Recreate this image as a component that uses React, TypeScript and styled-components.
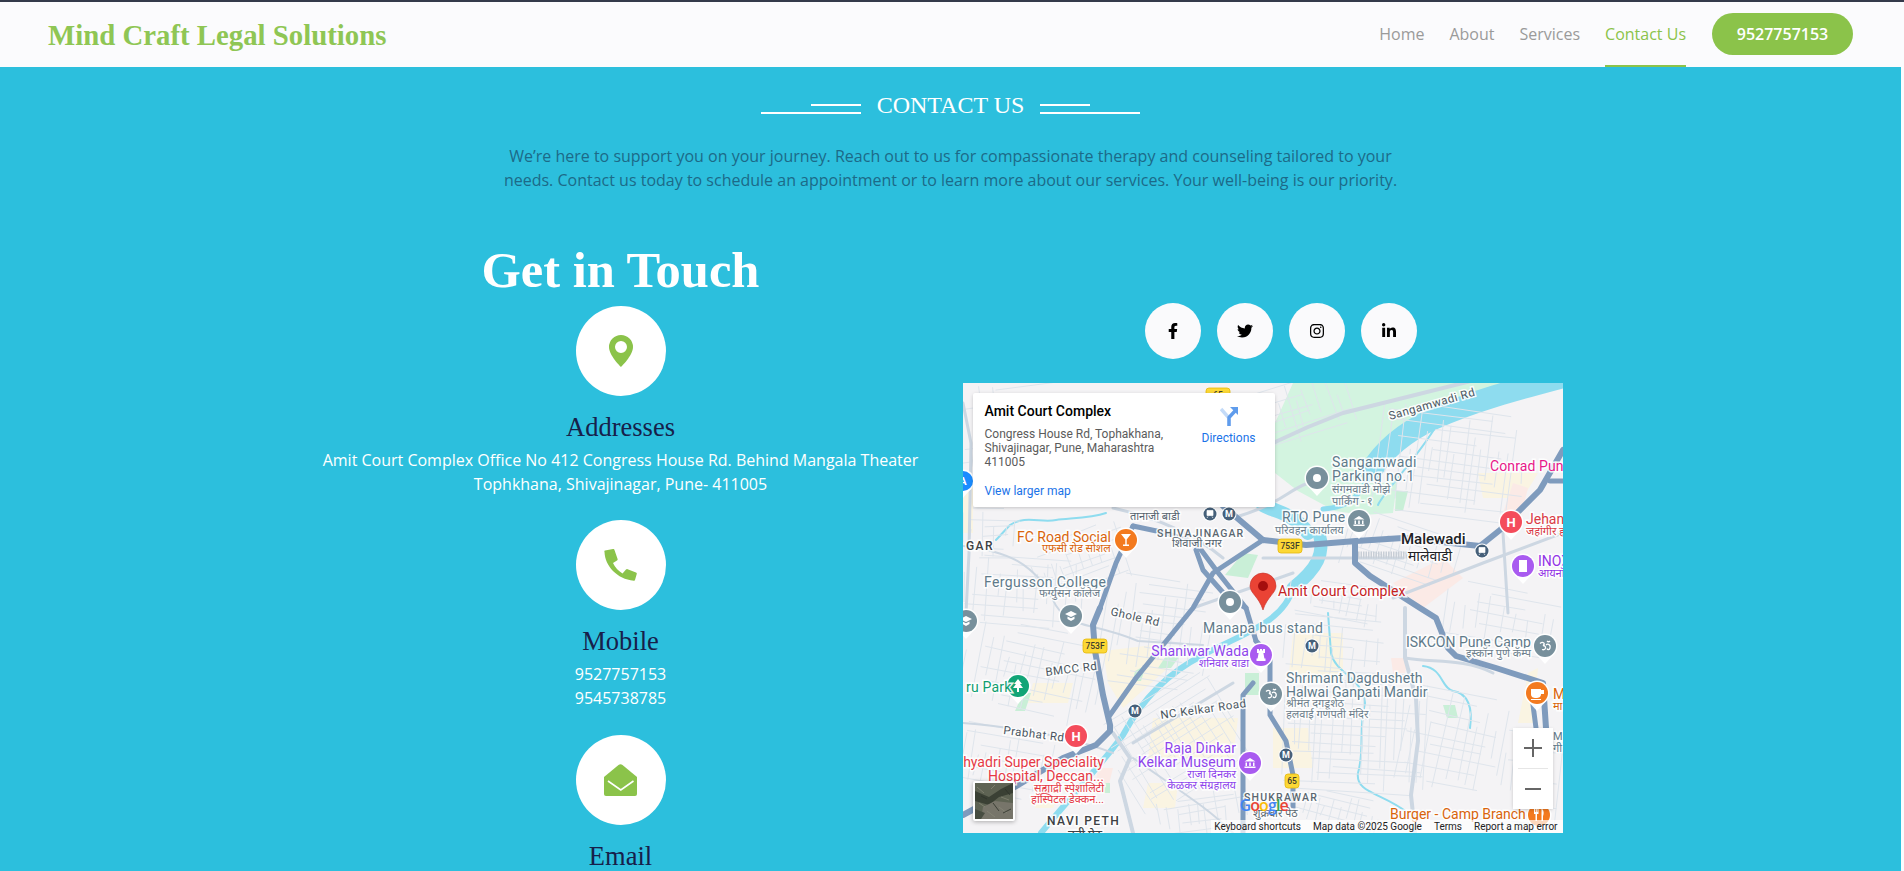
import React from "react";
import styled, { createGlobalStyle } from "styled-components";
import { FaFacebookF, FaTwitter, FaInstagram, FaLinkedinIn } from "react-icons/fa";
import { BsGeoAltFill } from "react-icons/bs";

const SERIF = `"Liberation Serif", "Times New Roman", serif`;
const SANS = `"Open Sans", "Noto Sans", sans-serif`;
const GREEN = "#8bc34a";
const CYAN = "#2cbfdd";

const Global = createGlobalStyle`
  html, body { margin: 0; padding: 0; height: 871px; overflow: hidden; background: #fbfbfd; }
  * { box-sizing: border-box; }
  body { font-family: ${SANS}; font-size: 16px; line-height: 24px; }
`;

const TopStrip = styled.div`
  height: 2px;
  background: #343a4a;
`;
const Page = styled.div`
  margin-right: 3px;
  height: 869px;
  overflow: hidden;
  background: ${CYAN};
`;
const Header = styled.header`
  height: 65px;
  background: #fbfbfd;
  padding: 0 48px;
  display: flex;
  align-items: stretch;
  justify-content: space-between;
`;
const Brand = styled.div`
  align-self: center;
  font-family: ${SERIF};
  font-size: 28.8px;
  font-weight: 700;
  color: #8fc654;
  line-height: 40px;
`;
const Nav = styled.nav`
  display: flex;
  align-items: stretch;
  gap: 25px;
`;
const NavLink = styled.a<{ $active?: boolean }>`
  display: flex;
  align-items: center;
  padding-top: 1px;
  font-size: 16px;
  color: ${(p) => (p.$active ? GREEN : "#9a9a9a")};
  border-bottom: 2px solid ${(p) => (p.$active ? GREEN : "transparent")};
`;
const CallButton = styled.a`
  align-self: center;
  margin-top: -1px;
  margin-left: 1px;
  height: 42px;
  width: 141px;
  border-radius: 21px;
  background: ${GREEN};
  color: #fff;
  font-weight: 600;
  font-size: 16px;
  display: flex;
  align-items: center;
  justify-content: center;
`;
const Section = styled.main`
  padding-top: 24px;
`;
const TitleRow = styled.div`
  display: flex;
  align-items: center;
  justify-content: center;
  gap: 16px;
`;
const Title = styled.h5`
  margin: 0;
  font-family: ${SERIF};
  font-weight: 400;
  font-size: 24px;
  line-height: 29px;
  color: #fff;
  white-space: nowrap;
`;
const TitleRule = styled.span<{ $side: "left" | "right" }>`
  position: relative;
  display: block;
  width: 100px;
  height: 10px;
  margin-top: 7px;
  border-bottom: 2px solid #fff;
  &::after {
    content: "";
    position: absolute;
    top: 0;
    ${(p) => (p.$side === "left" ? "right: 0;" : "left: 0;")}
    width: 50px;
    height: 2px;
    background: #fff;
  }
`;
const Lead = styled.p`
  margin: 24px auto 0;
  width: 920px;
  text-align: center;
  color: #1c6a88;
  font-size: 16px;
  line-height: 24px;
`;
const Columns = styled.div`
  width: 1320px;
  margin: 50px auto 0;
  display: grid;
  grid-template-columns: 1fr 1fr;
`;
const InfoColumn = styled.div`
  padding: 0 12px;
  text-align: center;
`;
const Heading = styled.h1`
  margin: 0 0 8px;
  font-family: ${SERIF};
  font-size: 50.5px;
  font-weight: 700;
  line-height: 56px;
  color: #fff;
`;
const InfoItem = styled.div`
  margin-bottom: 24.4px;
  display: flex;
  flex-direction: column;
  align-items: center;
`;
const IconCircle = styled.div`
  width: 90px;
  height: 90px;
  border-radius: 50%;
  background: #fff;
  color: ${GREEN};
  display: flex;
  align-items: center;
  justify-content: center;
  font-size: 32px;
`;
const InfoTitle = styled.h4`
  margin: 17px 0 6px;
  font-family: ${SERIF};
  font-weight: 400;
  font-size: 26.5px;
  line-height: 29px;
  color: #17204a;
`;
const InfoText = styled.div`
  color: #fff;
`;
const SideColumn = styled.div`
  padding: 61px 12px 0;
`;
const Socials = styled.div`
  display: flex;
  justify-content: center;
  gap: 16px;
  margin-bottom: 24px;
`;
const SocialLink = styled.a`
  width: 56px;
  height: 56px;
  border-radius: 50%;
  background: #fafafc;
  color: #000;
  font-size: 16px;
  display: flex;
  align-items: center;
  justify-content: center;
`;

/* ---------- map ---------- */
const MapFrame = styled.div`
  position: relative;
  width: 600px;
  height: 450px;
  overflow: hidden;
  background: #f4f3f5;
  font-family: Roboto, Arial, sans-serif;
`;
const MapCanvas = styled.svg`
  display: block;
`;
const MapLabel = styled.text<{ $c: string; $s: number; $w?: number; $ls?: number }>`
  font-family: Roboto, "Noto Sans Devanagari", "Noto Sans", sans-serif;
  fill: ${(p) => p.$c};
  font-size: ${(p) => p.$s}px;
  font-weight: ${(p) => p.$w ?? 400};
  letter-spacing: ${(p) => p.$ls ?? 0}px;
  paint-order: stroke;
  stroke: rgba(255, 255, 255, 0.9);
  stroke-width: 3px;
`;
const Popup = styled.div`
  position: absolute;
  left: 10px;
  top: 10px;
  width: 302px;
  height: 114px;
  background: #fff;
  border-radius: 2px;
  box-shadow: 0 1px 4px -1px rgba(0, 0, 0, 0.3);
  padding: 9px 12px 12px;
  display: flex;
  justify-content: space-between;
`;
const PopupBody = styled.div`
  width: 190px;
  display: flex;
  flex-direction: column;
`;
const PlaceName = styled.div`
  font-size: 14px;
  line-height: 18px;
  font-weight: 500;
  color: #000;
`;
const PlaceAddress = styled.div`
  margin-top: 7px;
  font-size: 12px;
  line-height: 14px;
  color: #5b5b5b;
`;
const MapLink = styled.a`
  font-size: 12px;
  line-height: 14px;
  color: #1a73e8;
`;
const LargerLink = styled(MapLink)`
  margin-top: 15px;
`;
const Directions = styled.div`
  display: flex;
  flex-direction: column;
  align-items: center;
  gap: 5px;
  width: 54px;
  margin: 4px 7px 0 0;
`;
const ZoomBox = styled.div`
  position: absolute;
  left: 550px;
  top: 345px;
  width: 40px;
  height: 81px;
  background: #fff;
  display: flex;
  flex-direction: column;
  align-items: center;
  justify-content: space-between;
  box-shadow: 0 1px 4px -1px rgba(0, 0, 0, 0.3);
`;
const ZoomBtn = styled.div`
  height: 40px;
  display: flex;
  align-items: center;
  justify-content: center;
`;
const ZoomRule = styled.div`
  width: 30px;
  height: 1px;
  background: #e6e6e6;
`;
const Satellite = styled.div`
  position: absolute;
  left: 10px;
  top: 398px;
  width: 42px;
  height: 40px;
  border: 2px solid #fff;
  border-radius: 2px;
  box-shadow: 0 1px 4px rgba(0, 0, 0, 0.3);
  overflow: hidden;
  background: #6b6f5c;
`;
const Attribution = styled.div`
  position: absolute;
  right: 0;
  bottom: 0;
  height: 13px;
  display: flex;
  align-items: center;
  padding: 0 5px 0 3px;
  gap: 12px;
  background: rgba(255, 255, 255, 0.7);
  font-size: 10px;
  line-height: 13px;
  color: #222;
  white-space: nowrap;
`;
const GoogleMark = styled.div`
  position: absolute;
  left: 277px;
  top: 411px;
  font-family: "Open Sans", Roboto, sans-serif;
  font-size: 16px;
  font-weight: 600;
  line-height: 22px;
  letter-spacing: -0.9px;
`;
const Hue = styled.span<{ $c: string }>`
  color: ${(p) => p.$c};
`;

/* deterministic street cluster generator */
function streets() {
  let seed = 17;
  const rnd = () => {
    seed = (seed * 1103515245 + 12345) & 0x7fffffff;
    return seed / 0x7fffffff;
  };
  const clusters: number[][] = [
    [60, 60, 130, 130, -8, 12],
    [60, 210, 120, 70, 4, 10],
    [70, 290, 140, 90, 12, 9],
    [40, 380, 100, 70, 10, 9],
    [195, 250, 110, 110, 8, 8],
    [215, 360, 130, 110, -32, 8],
    [240, 430, 90, 50, -8, 8],
    [370, 270, 100, 70, 6, 9],
    [395, 350, 150, 120, 3, 8],
    [370, 430, 100, 40, 14, 8],
    [490, 360, 100, 100, 12, 11],
    [540, 240, 120, 70, 10, 11],
    [490, 80, 150, 110, 7, 8],
    [440, 170, 120, 60, 18, 9],
    [570, 400, 60, 100, 6, 9],
    [330, 30, 120, 60, -18, 10],
    [370, 220, 90, 40, 10, 9],
    [120, 180, 100, 60, -20, 9],
    [30, 150, 60, 50, 0, 9],
  ];
  let d = "";
  for (const [cx, cy, w, h, a, step] of clusters) {
    const r = (a * Math.PI) / 180;
    const c = Math.cos(r);
    const s = Math.sin(r);
    const pt = (u: number, v: number) =>
      `${(cx + u * c - v * s).toFixed(1)} ${(cy + u * s + v * c).toFixed(1)}`;
    for (let v = -h / 2; v <= h / 2; v += step * (0.7 + rnd() * 0.7)) {
      const a0 = -w / 2 + rnd() * w * 0.4;
      const a1 = w / 2 - rnd() * w * 0.4;
      d += `M${pt(a0, v)}L${pt(a1, v + (rnd() - 0.5) * 4)}`;
    }
    for (let u = -w / 2; u <= w / 2; u += step * (0.7 + rnd() * 0.8)) {
      const b0 = -h / 2 + rnd() * h * 0.45;
      const b1 = h / 2 - rnd() * h * 0.45;
      d += `M${pt(u, b0)}L${pt(u + (rnd() - 0.5) * 4, b1)}`;
    }
  }
  return d;
}
const STREETS = streets();

type L = [string, number, number, string, number, number?, number?, "end"?];
const DEV = "#6d7f8c";
const GREY = "#5f7a8a";
const labels: L[] = [
  ["GAR", 3, 167, "#3c4043", 12, 500, 1.4],
  ["FC Road Social", 54, 159, "#d9640b", 14],
  ["एफसी रोड सोशल", 79, 169, "#d9640b", 11],
  ["तानाजी बाडी", 167, 137, "#55636e", 11],
  ["SHIVAJINAGAR", 194, 154, "#5b6770", 10.5, 500, 1.1],
  ["शिवाजी नगर", 209, 164, "#55636e", 11],
  ["Fergusson College", 21, 204, GREY, 14, 400, 0.4],
  ["फर्ग्युसन कॉलेज", 76, 214, DEV, 11],
  ["Sangamwadi", 369, 84, GREY, 14, 400, 0.4],
  ["Parking no.1", 369, 98, GREY, 14, 400, 0.4],
  ["संगमवाडी मोझे", 369, 110, DEV, 11],
  ["पार्किंग - १", 369, 122, DEV, 11],
  ["RTO Pune", 319, 139, GREY, 14, 400, 0.3],
  ["परिवहन कार्यालय", 312, 151, DEV, 11],
  ["Conrad Pun", 527, 88, "#e8178a", 14, 400, 0.1],
  ["Malewadi", 438, 161, "#202124", 15, 500],
  ["मालेवाडी", 445, 178, "#202124", 14],
  ["Jehan", 563, 141, "#d93a45", 14],
  ["जहांगीर ह", 563, 152, "#d93a45", 11],
  ["INOX", 575, 183, "#9334e6", 14],
  ["आयनॉक्स", 575, 194, "#9334e6", 11],
  ["Amit Court Complex", 315, 213, "#c5221f", 14, 400, 0.1],
  ["Manapa bus stand", 240, 250, GREY, 14, 400, 0.3],
  ["ISKCON Pune Camp", 443, 264, GREY, 14],
  ["इस्कॉन पुणे कॅम्प", 503, 274, DEV, 11],
  ["Shaniwar Wada", 286, 273, "#8e44ec", 14, 400, 0.1, "end"],
  ["शनिवार वाडा", 286, 284, "#8e44ec", 11, 400, 0, "end"],
  ["Shrimant Dagdusheth", 323, 300, GREY, 14, 400, 0.1],
  ["Halwai Ganpati Mandir", 323, 314, GREY, 14],
  ["श्रीमंत दगडूशेठ", 323, 324, DEV, 11],
  ["हलवाई गणपती मंदिर", 323, 335, DEV, 11],
  ["ru Park", 3, 309, "#0f9d70", 14, 400, 0.2],
  ["hyadri Super Speciality", 141, 384, "#e53945", 14, 400, 0, "end"],
  ["Hospital, Deccan...", 141, 398, "#e53945", 14, 400, 0, "end"],
  ["सह्याद्री स्पेशालिटी", 141, 409, "#e53945", 11, 400, 0, "end"],
  ["हॉस्पिटल डेक्कन...", 141, 420, "#e53945", 11, 400, 0, "end"],
  ["Raja Dinkar", 273, 370, "#8e44ec", 14, 400, 0.1, "end"],
  ["Kelkar Museum", 273, 384, "#8e44ec", 14, 400, 0.1, "end"],
  ["राजा दिनकर", 273, 395, "#8e44ec", 11, 400, 0, "end"],
  ["केळकर संग्रहालय", 273, 406, "#8e44ec", 11, 400, 0, "end"],
  ["NAVI PETH", 84, 442, "#3c4043", 12, 500, 1.4],
  ["नवी पेठ", 105, 456, "#3c4043", 12, 500],
  ["SHUKRAWAR", 281, 418, "#5b6770", 10.5, 500, 1.2],
  ["शुक्रवार पेठ", 290, 434, "#5b6770", 11],
  ["Burger - Camp Branch", 427, 436, "#d9640b", 14],
  ["M", 590, 316, "#d9640b", 14],
  ["मा", 590, 327, "#d9640b", 11],
  ["MP", 590, 357, GREY, 11],
  ["गी", 590, 369, GREY, 11],
];
const rotated: [string, number, number, number][] = [
  ["Sangamwadi Rd", 427, 37, -16],
  ["Ghole Rd", 147, 232, 13],
  ["BMCC Rd", 83, 293, -7],
  ["Prabhat Rd", 40, 351, 7],
  ["NC Kelkar Road", 198, 336, -8],
];

const Poi = ({ x, y, r = 10, c, children }: { x: number; y: number; r?: number; c: string; children?: React.ReactNode }) => (
  <g transform={`translate(${x} ${y})`}>
    <path d={`M${-r * 0.85} ${r * 0.7}L0 ${r + 7}L${r * 0.85} ${r * 0.7}Z`} fill="#fff" opacity={0.95} />
    <circle r={r + 1.5} fill="#fff" />
    <circle r={r} fill={c} />
    {children}
  </g>
);
const Dot = () => <circle r={4} fill="#fff" />;
const Letter = ({ t, s = 11 }: { t: string; s?: number }) => (
  <text textAnchor="middle" y={s * 0.36} fontFamily="Roboto, sans-serif" fontWeight={700} fontSize={s} fill="#fff">
    {t}
  </text>
);
const Cap = () => <path d="M-6 -2L0 -5L6 -2L0 1ZM-3.5 0.5V3L0 5L3.5 3V0.5L0 2.3Z" fill="#fff" />;
const Temple = () => <path d="M-5.5 -1.5L0 -5L5.5 -1.5ZM-4.5 -0.5H-3V3H-4.5ZM-0.8 -0.5H0.8V3H-0.8ZM3 -0.5H4.5V3H3ZM-5.5 3.5H5.5V5H-5.5Z" fill="#fff" />;
const Om = () => <path d="M-5 -2.5C-2 -5 1 -2 -2 -0.5C2 -0.5 1 5 -3 3.5M1 -1C3 -3 6 -1 5 2C4.5 4 2.5 4 2 2.5M2 -5C3 -4 4 -4 5 -5" fill="none" stroke="#fff" strokeWidth={1.3} />;
const Shield = ({ x, y, t, w = 24 }: { x: number; y: number; t: string; w?: number }) => (
  <g transform={`translate(${x} ${y})`}>
    <rect x={-w / 2} y={-7} width={w} height={14} rx={3} fill="#fcd835" stroke="#e5b80b" strokeWidth={0.8} />
    <text textAnchor="middle" y={3} fontFamily="Roboto, sans-serif" fontWeight={500} fontSize={8.5} fill="#3c3c2c">
      {t}
    </text>
  </g>
);
const Stop = ({ x, y, t }: { x: number; y: number; t?: string }) => (
  <g transform={`translate(${x} ${y})`}>
    <circle r={7.5} fill="#fff" />
    <circle r={6.5} fill="#46607a" />
    {t ? (
      <text textAnchor="middle" y={3.3} fontFamily="Roboto, sans-serif" fontWeight={700} fontSize={9} fill="#fff">
        {t}
      </text>
    ) : (
      <path d="M-3 -3.5H3V1.5H-3ZM-2 2.5L-3 4M2 2.5L3 4" fill="#fff" stroke="#fff" strokeWidth={0.7} />
    )}
  </g>
);

const ROAD = "#7f9bbd";
const MapDrawing = () => (
  <MapCanvas width={600} height={450} viewBox="0 0 600 450">
    <rect width={600} height={450} fill="#f4f3f5" />
    {/* neighbourhood tints */}
    <g fill="#faf4e2">
      <path d="M140 268L190 262L205 285L160 325L145 300Z" />
      <path d="M70 300H110L105 320H65Z" />
      <path d="M190 335H275L270 375H185Z" />
      <path d="M330 250H380V300H325Z" />
      <path d="M310 345H345L350 385H310Z" />
      <path d="M515 90H575L560 115H520Z" />
      <path d="M565 290L575 285L570 340H555Z" />
      <path d="M75 402H100L90 425H72Z" />
      <path d="M185 400H215L212 425H180Z" />
      <path d="M0 100H10V150H0Z" />
    </g>
    <g fill="#fbeae6">
      <path d="M430 200L480 175L500 195L460 225Z" />
      <path d="M428 275H445L442 290H430Z" />
      <path d="M550 100L565 105L555 145L540 130Z" />
      <path d="M135 385H150L145 405H132Z" />
    </g>
    {/* parkland */}
    <path d="M330 0H560L470 34L420 62L392 100L420 100L435 92L430 130L400 132L372 128L335 108L312 90V40Z" fill="#d3f4e0" />
    <g fill="#c9efd7">
      <path d="M433 108H445L440 128H432Z" />
      <path d="M280 170L295 172L285 195L262 192Z" />
      <path d="M205 270L225 262L208 285H195Z" />
      <path d="M60 310H68L62 328H52Z" />
      <path d="M282 290H296V312H282Z" />
      <path d="M480 322H492L495 335H484Z" />
      <path d="M142 400H147V410H138Z" />
      <path d="M172 288L183 282L178 298H170Z" />
    </g>
    {/* rivers */}
    <g fill="none" stroke="#8edcef" strokeLinecap="round" strokeLinejoin="round">
      <path d="M600 -6C555 6 510 18 470 36C440 50 420 68 408 88" strokeWidth={22} />
      <path d="M405 95C395 112 390 124 360 126" strokeWidth={5} />
      <path d="M300 122C315 130 330 130 345 150" strokeWidth={14} />
      <path d="M356 150C362 170 355 185 330 205" strokeWidth={13} />
      <path d="M330 205C320 240 280 250 240 272C205 290 180 315 160 352C140 380 115 405 78 450" strokeWidth={6} />
      <path d="M472 45C450 80 420 110 415 122" strokeWidth={2} />
      <path d="M33 157L47 142C62 132 78 140 93 137C110 135 128 135 143 130" strokeWidth={2} />
      <path d="M365 230L368 270C372 290 400 295 402 320C395 350 402 365 395 390C392 410 420 410 445 430" strokeWidth={2} />
      <path d="M460 283C480 285 478 305 490 308C505 310 510 325 507 345" strokeWidth={2} />
    </g>
    {/* small streets */}
    <path d={STREETS} fill="none" stroke="#dfe5ec" strokeWidth={1} />
    {/* medium roads */}
    <g fill="none" stroke="#cdd7e2" strokeLinecap="round" strokeLinejoin="round">
      <path d="M150 350L167 375L157 398L170 450" strokeWidth={4} />
      <path d="M442 225V275L453 315L455 358L448 412L452 450" strokeWidth={4} />
      <path d="M0 20L8 60L6 170L2 250" strokeWidth={3} />
      <path d="M345 100C320 110 320 120 270 135" strokeWidth={3} />
      <path d="M310 60L345 44L380 30L520 -5" strokeWidth={4} />
      <path d="M430 215L520 180L600 150" strokeWidth={3} />
      <path d="M300 175H440" strokeWidth={3} />
      <path d="M540 150L545 230M230 225L330 190" strokeWidth={3} />
      <path d="M0 163C60 170 70 190 85 205C100 250 120 235 175 258L240 262" strokeWidth={2} />
      <path d="M0 340C60 345 110 355 150 370" strokeWidth={2} />
      <path d="M170 375C220 410 245 425 270 450" strokeWidth={2} />
      <path d="M170 360L270 300" strokeWidth={3} />
      <path d="M442 275C470 280 500 275 530 290" strokeWidth={3} />
      <path d="M150 125C195 135 230 150 260 175" strokeWidth={3} />
    </g>
    <path d="M390 172H445" stroke="#c8ced6" strokeWidth={7} strokeDasharray="1.5 1" fill="none" />
    {/* main roads */}
    <g fill="none" stroke={ROAD} strokeLinejoin="round" strokeLinecap="round">
      <path d="M170 143L203 150L233 160L253 187L283 225L293 258" strokeWidth={5} />
      <path d="M137 225L153 180L170 143" strokeWidth={5} />
      <path d="M137 225L130 242L132 268L140 312L147 342V348L133 362L100 375L50 405L0 432" strokeWidth={6} />
      <path d="M300 157L250 190L230 225L200 262L173 295L147 332" strokeWidth={5} />
      <path d="M260 123L300 157" strokeWidth={6} />
      <path d="M233 167L240 187L263 213L283 225" strokeWidth={5} />
      <path d="M300 157L343 162L393 158L440 155L517 163L537 147L577 107L600 67" strokeWidth={6} />
      <path d="M587 98H600" strokeWidth={5} />
      <path d="M392 160V180L407 193L457 225L473 235L485 265L493 273L533 285L580 300L583 345" strokeWidth={6} />
      <path d="M570 322L573 345" strokeWidth={5} />
      <path d="M293 258L307 272V332L323 358L330 392L330 425" strokeWidth={5} />
      <path d="M290 300L280 312V450" strokeWidth={5} />
    </g>
    <Shield x={255} y={12} t="65" />
    <Shield x={327} y={163} t="753F" />
    <Shield x={132} y={263} t="753F" />
    <Shield x={329} y={398} t="65" w={14} />
    {/* places */}
    <Poi x={0} y={98} c="#1a8cff"><Letter t="A" /></Poi>
    <Poi x={354} y={95} r={11} c="#78909c"><Dot /></Poi>
    <Poi x={396} y={138} r={11} c="#78909c"><Temple /></Poi>
    <Poi x={548} y={139} r={11} c="#f44c5b"><Letter t="H" s={13} /></Poi>
    <Poi x={560} y={183} r={11} c="#a95bf0"><path d="M-4 -6H4V6H-4Z" fill="#fff" /></Poi>
    <Poi x={163} y={157} r={11} c="#f37a1f"><path d="M-5 -6H5L0.7 -0.5V4.5H3V6H-3V4.5H-0.7V-0.5Z" fill="#fff" /></Poi>
    <Poi x={267} y={219} r={11} c="#78909c"><Dot /></Poi>
    <Poi x={108} y={233} r={11} c="#78909c"><Cap /></Poi>
    <Poi x={3} y={238} r={11} c="#78909c"><Cap /></Poi>
    <Poi x={55} y={303} r={11} c="#12a577"><path d="M0 -7L4 -2H2L5 2H1V6H-1V2H-5L-2 -2H-4Z" fill="#fff" /></Poi>
    <Poi x={113} y={353} r={11} c="#f44c5b"><Letter t="H" s={13} /></Poi>
    <Poi x={298} y={272} r={11} c="#a95bf0"><path d="M-4 -6H-2V-4.5H-1V-6H1V-4.5H2V-6H4V-2H2.4L3.4 3.5H4.5V6H-4.5V3.5H-3.4L-2.4 -2H-4Z" fill="#fff" /></Poi>
    <Poi x={308} y={311} r={11} c="#78909c"><Om /></Poi>
    <Poi x={287} y={380} r={11} c="#a95bf0"><Temple /></Poi>
    <Poi x={582} y={263} r={11} c="#78909c"><Om /></Poi>
    <Poi x={574} y={310} r={11} c="#f37a1f"><path d="M-6 -4H4V1C4 4 2 5 -1 5C-4 5 -6 4 -6 1ZM4 -3H7V1H4ZM-6 6H4V7H-6Z" fill="#fff" /></Poi>
    <Poi x={576} y={432} r={11} c="#f37a1f"><path d="M-5 -6V-1H-3.5V6H-2V-1H-0.5V-6H-1.5V-3H-2.2V-6H-3.3V-3H-4V-6ZM3 -6C5 -5 5 -1 4 1V6H2.5V-6Z" fill="#fff" /></Poi>
    <Stop x={247} y={131} />
    <Stop x={266} y={131} t="M" />
    <Stop x={519} y={168} />
    <Stop x={172} y={328} t="M" />
    <Stop x={349} y={263} t="M" />
    <Stop x={323} y={372} t="M" />
    {labels.map(([t, x, y, c, s, w, ls, anchor], i) => (
      <MapLabel key={i} x={x} y={y} $c={c} $s={s} $w={w} $ls={ls} textAnchor={anchor ?? "start"}>
        {t}
      </MapLabel>
    ))}
    {rotated.map(([t, x, y, deg]) => (
      <MapLabel key={t} x={x} y={y} $c="#4a5560" $s={11.5} $ls={0.5} transform={`rotate(${deg} ${x} ${y})`}>
        {t}
      </MapLabel>
    ))}
    {/* destination pin */}
    <path d="M300 227C296 214 287 210 287 203A13 13 0 0 1 313 203C313 210 304 214 300 227Z" fill="#ea4335" stroke="#c5302a" strokeWidth={0.6} />
    <circle cx={300} cy={203} r={5} fill="#a50e0e" />
  </MapCanvas>
);

const SatelliteThumb = () => (
  <svg width={38} height={36} viewBox="0 0 38 36">
    <rect width={38} height={36} fill="#5e6353" />
    <path d="M0 8L14 14L26 6L38 0V10L24 14L14 22L0 18Z" fill="#3a4034" />
    <path d="M8 24L20 18L38 20V36H6Z" fill="#77756a" />
    <path d="M0 26L10 30L6 36H0Z" fill="#474d41" />
    <path d="M2 4L9 10M16 6L20 2M26 14L34 17M12 28L20 34M24 24L32 30M4 20L10 24" stroke="#8b8b7a" strokeWidth={1} opacity={0.7} />
    <path d="M30 6L35 12M6 13L12 16M18 20L24 28M28 30L36 26" stroke="#2f342b" strokeWidth={1} opacity={0.8} />
  </svg>
);

const DirectionsIcon = () => (
  <svg width={18} height={20} viewBox="0 0 18 20">
    <path d="M9 20V12L1 3" fill="none" stroke="#c4dbf8" strokeWidth={3.4} />
    <path d="M9 20V11.5L15 5" fill="none" stroke="#5f9cec" strokeWidth={3.4} />
    <path d="M10 1H18V9Z" fill="#5f9cec" />
  </svg>
);

const PhoneGlyph = () => (
  <svg width={33} height={32} viewBox="0 0 33 32" fill="currentColor">
    <path d="M0.5 3Q0 2 1 1.6L9 0Q10 -0.2 10.4 0.8L13.6 10Q13.9 11 13 11.6L9 14Q12 20.5 18.5 24.5L22 20.6Q22.7 19.8 23.6 20.2L32 23.4Q33 23.8 32.8 24.8L31 31Q30.8 32 29.8 31.8C13 30 1 17 0.5 3Z" />
  </svg>
);
const MailGlyph = () => (
  <svg width={33} height={32} viewBox="0 0 33 32">
    <path d="M0 13L14.5 1Q16.5 -0.3 18.5 1L33 13V30A2 2 0 0 1 31 32H2A2 2 0 0 1 0 30Z" fill="currentColor" />
    <path d="M4 17L16.8 26L29.5 17" fill="none" stroke="#fff" strokeWidth={1.6} />
  </svg>
);

export default function App() {
  return (
    <>
      <Global />
      <TopStrip />
      <Page>
        <Header>
          <Brand>Mind Craft Legal Solutions</Brand>
          <Nav>
            <NavLink>Home</NavLink>
            <NavLink>About</NavLink>
            <NavLink>Services</NavLink>
            <NavLink $active>Contact Us</NavLink>
            <CallButton>9527757153</CallButton>
          </Nav>
        </Header>
        <Section>
          <TitleRow>
            <TitleRule $side="left" />
            <Title>CONTACT US</Title>
            <TitleRule $side="right" />
          </TitleRow>
          <Lead>
            We’re here to support you on your journey. Reach out to us for compassionate therapy and counseling tailored to your needs. Contact us today to schedule an appointment or to learn more about our services. Your well-being is our priority.
          </Lead>
          <Columns>
            <InfoColumn>
              <Heading>Get in Touch</Heading>
              <InfoItem>
                <IconCircle><BsGeoAltFill /></IconCircle>
                <InfoTitle>Addresses</InfoTitle>
                <InfoText>
                  Amit Court Complex Office No 412 Congress House Rd. Behind Mangala Theater
                  <br />
                  Tophkhana, Shivajinagar, Pune- 411005
                </InfoText>
              </InfoItem>
              <InfoItem>
                <IconCircle><PhoneGlyph /></IconCircle>
                <InfoTitle>Mobile</InfoTitle>
                <InfoText>
                  9527757153
                  <br />
                  9545738785
                </InfoText>
              </InfoItem>
              <InfoItem>
                <IconCircle><MailGlyph /></IconCircle>
                <InfoTitle>Email</InfoTitle>
              </InfoItem>
            </InfoColumn>
            <SideColumn>
              <Socials>
                <SocialLink><FaFacebookF /></SocialLink>
                <SocialLink><FaTwitter /></SocialLink>
                <SocialLink><FaInstagram /></SocialLink>
                <SocialLink><FaLinkedinIn /></SocialLink>
              </Socials>
              <MapFrame>
                <MapDrawing />
                <Popup>
                  <PopupBody>
                    <PlaceName>Amit Court Complex</PlaceName>
                    <PlaceAddress>
                      Congress House Rd, Tophakhana, Shivajinagar, Pune, Maharashtra 411005
                    </PlaceAddress>
                    <LargerLink>View larger map</LargerLink>
                  </PopupBody>
                  <Directions>
                    <DirectionsIcon />
                    <MapLink>Directions</MapLink>
                  </Directions>
                </Popup>
                <GoogleMark>
                  <Hue $c="#4285f4">G</Hue>
                  <Hue $c="#ea4335">o</Hue>
                  <Hue $c="#fbbc05">o</Hue>
                  <Hue $c="#4285f4">g</Hue>
                  <Hue $c="#34a853">l</Hue>
                  <Hue $c="#ea4335">e</Hue>
                </GoogleMark>
                <Satellite><SatelliteThumb /></Satellite>
                <ZoomBox>
                  <ZoomBtn>
                    <svg width={18} height={18} viewBox="0 0 18 18"><path d="M8 0h2v8h8v2h-8v8H8v-8H0V8h8z" fill="#666" /></svg>
                  </ZoomBtn>
                  <ZoomRule />
                  <ZoomBtn>
                    <svg width={18} height={18} viewBox="0 0 18 18"><path d="M1 8h16v2H1z" fill="#666" /></svg>
                  </ZoomBtn>
                </ZoomBox>
                <Attribution>
                  <span>Keyboard shortcuts</span>
                  <span>Map data ©2025 Google</span>
                  <span>Terms</span>
                  <span>Report a map error</span>
                </Attribution>
              </MapFrame>
            </SideColumn>
          </Columns>
        </Section>
      </Page>
    </>
  );
}
